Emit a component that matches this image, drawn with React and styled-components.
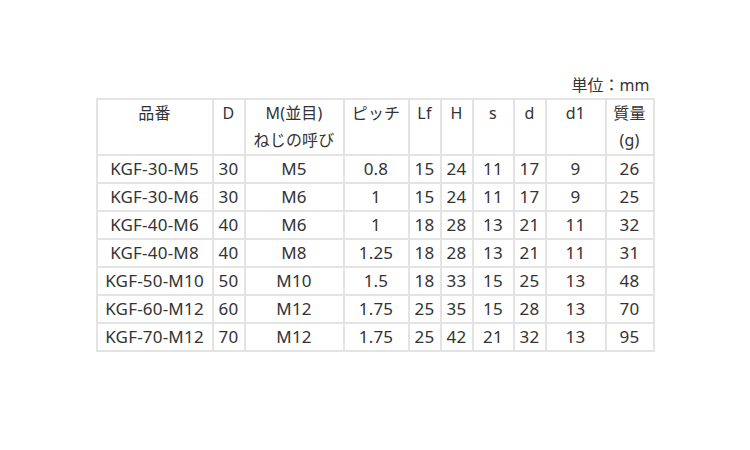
import React from 'react';
import styled, { createGlobalStyle } from 'styled-components';

const GlobalStyle = createGlobalStyle`
  body {
    margin: 0;
    background: #fff;
    font-family: "Noto Sans", "Noto Sans CJK JP", sans-serif;
    color: #333;
  }
`;

const Page = styled.div`
  display: flex;
  justify-content: center;
  padding-top: 72px;
`;

const Wrapper = styled.div`
  width: 559px;
`;

const Unit = styled.div`
  text-align: right;
  font-size: 16px;
  line-height: 26px;
  padding-right: 5px;
`;

const Table = styled.table`
  border-collapse: separate;
  border-spacing: 0;
  table-layout: fixed;
  width: 559px;
  border-top: 2px solid #e3e3e3;
  border-left: 2px solid #e3e3e3;
  font-size: 17px;
  letter-spacing: 0.2px;
`;

const Th = styled.th`
  box-sizing: border-box;
  width: ${(p) => p.$w}px;
  padding: 0;
  font-weight: normal;
  font-size: 16px;
  line-height: 27px;
  vertical-align: top;
  text-align: center;
  border-right: 2px solid #e3e3e3;
  border-bottom: 2px solid #e3e3e3;
`;

const Td = styled.td`
  padding: 0;
  height: 26px;
  line-height: 26px;
  text-align: center;
  border-right: 2px solid #e3e3e3;
  border-bottom: 2px solid #e3e3e3;
`;

const headers = [
  { w: 116, label: '品番' },
  { w: 32, label: 'D' },
  { w: 99, label: ['M(並目)', 'ねじの呼び'] },
  { w: 65, label: 'ピッチ' },
  { w: 32, label: 'Lf' },
  { w: 32, label: 'H' },
  { w: 41, label: 's' },
  { w: 32, label: 'd' },
  { w: 60, label: 'd1' },
  { w: 48, label: ['質量', '(g)'] },
];

const rows = [
  ['KGF-30-M5', '30', 'M5', '0.8', '15', '24', '11', '17', '9', '26'],
  ['KGF-30-M6', '30', 'M6', '1', '15', '24', '11', '17', '9', '25'],
  ['KGF-40-M6', '40', 'M6', '1', '18', '28', '13', '21', '11', '32'],
  ['KGF-40-M8', '40', 'M8', '1.25', '18', '28', '13', '21', '11', '31'],
  ['KGF-50-M10', '50', 'M10', '1.5', '18', '33', '15', '25', '13', '48'],
  ['KGF-60-M12', '60', 'M12', '1.75', '25', '35', '15', '28', '13', '70'],
  ['KGF-70-M12', '70', 'M12', '1.75', '25', '42', '21', '32', '13', '95'],
];

const App = () => {
  return (
    <Page>
      <GlobalStyle />
      <Wrapper>
        <Unit>単位：mm</Unit>
        <Table>
          <thead>
            <tr>
              {headers.map((h, i) => (
                <Th key={i} $w={h.w}>
                  {Array.isArray(h.label) ? (
                    <>
                      {h.label[0]}
                      <br />
                      {h.label[1]}
                    </>
                  ) : (
                    h.label
                  )}
                </Th>
              ))}
            </tr>
          </thead>
          <tbody>
            {rows.map((r) => (
              <tr key={r[0]}>
                {r.map((c, i) => (
                  <Td key={i}>{c}</Td>
                ))}
              </tr>
            ))}
          </tbody>
        </Table>
      </Wrapper>
    </Page>
  );
};

export default App;
